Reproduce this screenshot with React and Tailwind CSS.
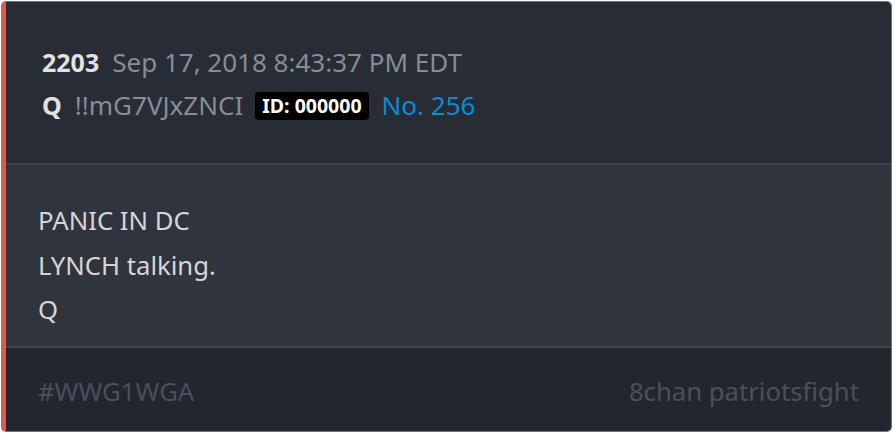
export default function App() {
  return (
    <div className="w-[894px] h-[434px] bg-white p-[1px] pt-[1px]" style={{ fontFamily: '"Noto Sans", sans-serif' }}>
      <div className="w-[891px] h-[431px] rounded-[5px] border border-[#6e737b] border-l-[5px] border-l-[#e25656] overflow-hidden flex flex-col">
        <div className="bg-[#282c34] h-[161px] pl-[36px] pt-[39px] flex flex-col">
          <div className="flex items-center h-[43px] text-[26px]">
            <span className="font-bold text-[25px] text-[#e2e2e2]">2203</span>
            <span className="ml-[13px] text-[#878c96]">Sep 17, 2018 8:43:37 PM EDT</span>
          </div>
          <div className="flex items-center h-[43px] text-[26px]">
            <span className="font-bold text-[25px] text-[#e2e2e2]">Q</span>
            <span className="ml-[13px] text-[#878c96]">!!mG7VJxZNCI</span>
            <span className="ml-[12px] bg-black text-white font-bold text-[19.5px] leading-[28px] h-[28px] px-[7px] rounded-[4px]">ID: 000000</span>
            <span className="ml-[13px] text-[#0b8bd4]">No. 256</span>
          </div>
        </div>
        <div className="h-[2px] bg-[#3e434c]" />
        <div className="bg-[#2f343d] h-[181px] pl-[32px] pt-[34px] text-[25.7px] leading-[44.5px] text-[#d6d6d6]">
          <div>PANIC IN DC</div>
          <div>LYNCH talking.</div>
          <div>Q</div>
        </div>
        <div className="h-[2px] bg-[#3e434c]" />
        <div className="bg-[#23262e] flex-1 flex items-center justify-between pl-[32px] pr-[32px] pt-[6px] text-[25.7px] text-[#4b505a]">
          <span>#WWG1WGA</span>
          <span>8chan patriotsfight</span>
        </div>
      </div>
    </div>
  );
}
